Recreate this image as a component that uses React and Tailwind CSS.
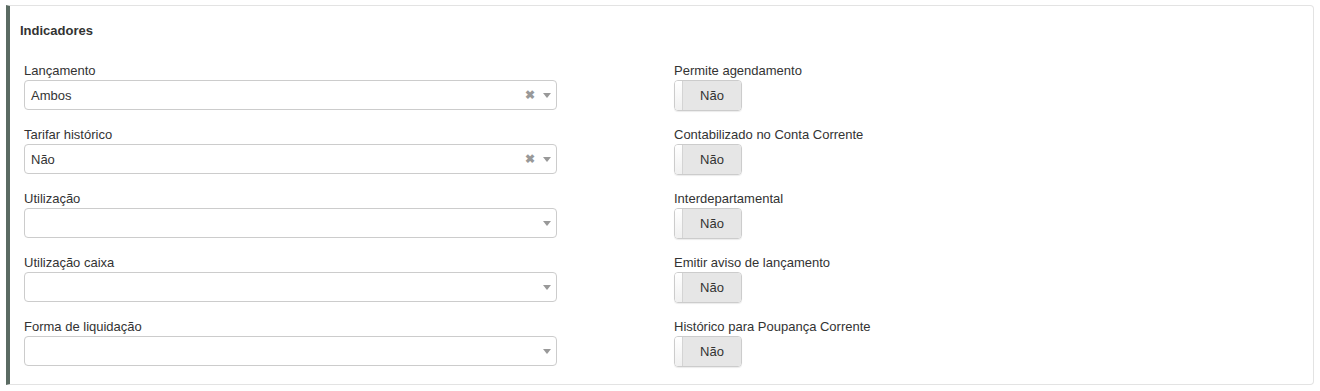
import React from 'react';

const leftFields = [
  { label: 'Lançamento', value: 'Ambos', clearable: true },
  { label: 'Tarifar histórico', value: 'Não', clearable: true },
  { label: 'Utilização', value: '', clearable: false },
  { label: 'Utilização caixa', value: '', clearable: false },
  { label: 'Forma de liquidação', value: '', clearable: false },
];

const rightFields = [
  'Permite agendamento',
  'Contabilizado no Conta Corrente',
  'Interdepartamental',
  'Emitir aviso de lançamento',
  'Histórico para Poupança Corrente',
];

const Select = ({ value, clearable }) => (
  <div className="flex items-center h-[30px] w-[533px] border border-[#cccccc] rounded-[4px] bg-white pl-[6px] pr-[5px]">
    <span className="flex-1 text-[13px] text-[#333333] pt-[1px]">{value}</span>
    {clearable && (
      <span className="text-[#999999] text-[12px] font-bold leading-none mr-[8px]">✖</span>
    )}
    <svg width="8" height="5" viewBox="0 0 8 5" className="mt-[1px]">
      <path d="M0 0 L8 0 L4 5 Z" fill="#999999" />
    </svg>
  </div>
);

const Toggle = () => (
  <div className="flex h-[31px] w-[68px] border border-[#cccccc] rounded-[4px] overflow-hidden shadow-[0_1px_1px_rgba(0,0,0,0.08)]">
    <div className="w-[8px] bg-gradient-to-b from-white to-[#f0f0f0] border-r border-[#d4d4d4]" />
    <div className="flex-1 flex items-center justify-center bg-[#e6e6e6] text-[13px] text-[#333333] pt-[1px]">
      Não
    </div>
  </div>
);

const App = () => {
  return (
    <div className="bg-white min-h-screen pt-[5px] pl-[6px]" style={{ fontFamily: '"Liberation Sans", Arial, sans-serif' }}>
      <div className="w-[1308px] h-[380px] border border-[#e3e3e3] border-l-4 border-l-[#5b6b63] rounded-r-[4px] bg-white">
        {/* Header */}
        <div className="pt-[15px] pl-[10px] h-[20px] box-content">
          <h3 className="text-[13px] font-bold leading-[20px] text-[#333333]">Indicadores</h3>
        </div>

        {/* Fields */}
        <div className="flex pl-[14px] mt-[22px]">
          <div className="w-[650px]">
            {leftFields.map((f) => (
              <div key={f.label} className="mb-[17px]">
                <label className="block text-[13px] leading-[16px] text-[#333333] mb-[1px]">{f.label}</label>
                <Select value={f.value} clearable={f.clearable} />
              </div>
            ))}
          </div>
          <div>
            {rightFields.map((label) => (
              <div key={label} className="mb-[16px]">
                <label className="block text-[13px] leading-[16px] text-[#333333] mb-[1px]">{label}</label>
                <Toggle />
              </div>
            ))}
          </div>
        </div>
      </div>
    </div>
  );
};

export default App;
